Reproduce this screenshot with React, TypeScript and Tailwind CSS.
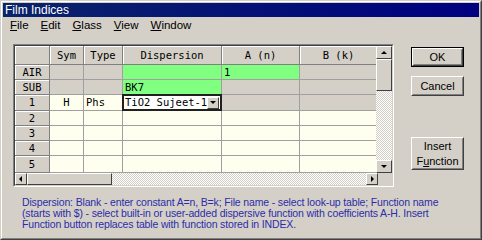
import React from "react";

const ui = "font-['Liberation_Sans',Arial,sans-serif]";
const mono = "font-['DejaVu_Sans_Mono',monospace]";

function Arrow({ dir }: { dir: "up" | "down" | "left" | "right" }) {
  const pts = {
    up: "1,5 4,2 7,5",
    down: "1,2 4,5 7,2",
    left: "5,1 2,4 5,7",
    right: "3,1 6,4 3,7",
  }[dir];
  return (
    <svg width="8" height="8" viewBox="0 0 8 8">
      <polygon points={pts} fill="#000" />
    </svg>
  );
}

function ScrollBtn({ dir, className }: { dir: "up" | "down" | "left" | "right"; className?: string }) {
  return (
    <div
      className={`flex items-center justify-center bg-[#d4d0c8] border border-t-white border-l-white border-r-[#404040] border-b-[#404040] ${className ?? ""}`}
    >
      <Arrow dir={dir} />
    </div>
  );
}

function WinButton({ children, def, className }: { children: React.ReactNode; def?: boolean; className?: string }) {
  return (
    <div className={`${def ? "border border-black" : ""} ${className ?? ""}`}>
      <div className="h-full border border-t-white border-l-white border-r-[#404040] border-b-[#404040]">
        <div className="h-full flex items-center justify-center text-center leading-[15px] border border-t-[#d4d0c8] border-l-[#d4d0c8] border-r-[#808080] border-b-[#808080] text-[11px] text-black">
          {children}
        </div>
      </div>
    </div>
  );
}

type Cell = { text?: string; bg: "head" | "gray" | "green" | "yellow" | "drop"; align?: "c" | "l" };

const headerRow: Cell[] = [
  { bg: "head" },
  { text: "Sym", bg: "head", align: "c" },
  { text: "Type", bg: "head", align: "c" },
  { text: "Dispersion", bg: "head", align: "c" },
  { text: "A (n)", bg: "head", align: "c" },
  { text: "B (k)", bg: "head", align: "c" },
];

const rows: Cell[][] = [
  [{ text: "AIR", bg: "head", align: "c" }, { bg: "gray" }, { bg: "gray" }, { bg: "green" }, { text: "1", bg: "green" }, { bg: "gray" }],
  [{ text: "SUB", bg: "head", align: "c" }, { bg: "gray" }, { bg: "gray" }, { text: "BK7", bg: "green" }, { bg: "gray" }, { bg: "gray" }],
  [{ text: "1", bg: "head", align: "c" }, { text: "H", bg: "yellow", align: "c" }, { text: "Phs", bg: "yellow" }, { text: "TiO2 Sujeet-1", bg: "drop" }, { bg: "gray" }, { bg: "gray" }],
  ...["2", "3", "4", "5"].map((n) => [
    { text: n, bg: "head", align: "c" } as Cell,
    { bg: "yellow" } as Cell,
    { bg: "yellow" } as Cell,
    { bg: "yellow" } as Cell,
    { bg: "yellow" } as Cell,
    { bg: "yellow" } as Cell,
  ]),
];

function GridCell({ cell }: { cell: Cell }) {
  const align = cell.align === "c" ? "justify-center" : "justify-start pl-[2px]";
  if (cell.bg === "head") {
    return (
      <div className={`flex items-center ${align} bg-[#d4d0c8] border-r border-b border-r-[#808080] border-b-[#808080] shadow-[inset_1px_1px_0_#fff] text-[#000] overflow-hidden`}>
        {cell.text}
      </div>
    );
  }
  if (cell.bg === "drop") {
    return (
      <div className="relative bg-[#fffff0] border-r border-b border-[#a0a0a0]">
        <div className="absolute -top-[1px] -left-[1px] -right-[1px] -bottom-[1px] flex items-center border-2 border-[#202020] bg-white">
          <span className="pl-[1px] flex-1 whitespace-nowrap overflow-hidden">{cell.text}</span>
          <div className="w-[12px] h-[12px] mr-[1px] flex items-center justify-center bg-[#d4d0c8] border border-t-white border-l-white border-r-[#404040] border-b-[#404040]">
            <Arrow dir="down" />
          </div>
        </div>
      </div>
    );
  }
  const bg = cell.bg === "gray" ? "bg-[#d4d0c8]" : cell.bg === "green" ? "bg-[#80ff80]" : "bg-[#fffff0]";
  return (
    <div className={`flex items-center ${align} ${bg} border-r border-b border-[#a0a0a0] overflow-hidden`}>
      {cell.text}
    </div>
  );
}

export default function App() {
  return (
    <div className={`w-[482px] h-[240px] bg-[#d4d0c8] ${ui} text-[11px] overflow-hidden`}>
      <div className="h-full border border-t-[#d4d0c8] border-l-[#d4d0c8] border-r-[#404040] border-b-[#404040]">
        <div className="h-full flex flex-col border border-t-white border-l-white border-r-[#808080] border-b-[#808080] p-[1px]">
          <div className="h-[14px] flex items-center pl-[2px] bg-[linear-gradient(to_right,#0a246a,#000080)] text-white text-[12px] leading-none">
            Film Indices
          </div>
          <div className="h-[17px] flex items-center pl-[1px] text-[11.5px] text-black">
            <span className="px-[6px]"><span className="underline">F</span>ile</span>
            <span className="px-[6px]"><span className="underline">E</span>dit</span>
            <span className="px-[6px]"><span className="underline">G</span>lass</span>
            <span className="px-[6px]"><span className="underline">V</span>iew</span>
            <span className="px-[6px]"><span className="underline">W</span>indow</span>
          </div>
          <div className="flex mt-[10px]">
            <div className="ml-[10px] w-[381px] h-[143px] border border-t-[#808080] border-l-[#808080] border-r-white border-b-white">
              <div className="h-full flex flex-col border border-t-[#404040] border-l-[#404040] border-r-[#d4d0c8] border-b-[#d4d0c8]">
                <div className="flex h-[127px]">
                  <div className={`w-[363px] h-[127px] overflow-hidden ${mono} text-[10.5px] text-black leading-none grid grid-cols-[35px_34px_39px_99px_78px_78px] grid-rows-[19px_15px_15px_16px_15px_15px_15px_17px]`}>
                    {[headerRow, ...rows].map((r, i) => r.map((c, j) => <GridCell key={`${i}-${j}`} cell={c} />))}
                  </div>
                  <div className="w-[16px] flex flex-col">
                    <ScrollBtn dir="up" className="h-[13px]" />
                    <div className="h-[32px] bg-[#d4d0c8] border border-t-white border-l-white border-r-[#404040] border-b-[#404040]" />
                    <div className="flex-1 bg-[#ebe9e5] bg-[repeating-conic-gradient(#d4d0c8_0%_25%,#ffffff_0%_50%)] bg-[length:2px_2px]" />
                    <ScrollBtn dir="down" className="h-[13px]" />
                  </div>
                </div>
                <div className="flex h-[13px]">
                  <ScrollBtn dir="left" className="w-[12px]" />
                  <div className="w-[85px] bg-[#d4d0c8] border border-t-white border-l-white border-r-[#404040] border-b-[#404040]" />
                  <div className="w-[254px] bg-[#ebe9e5] bg-[repeating-conic-gradient(#d4d0c8_0%_25%,#ffffff_0%_50%)] bg-[length:2px_2px]" />
                  <ScrollBtn dir="right" className="w-[12px]" />
                  <div className="flex-1 bg-[#d4d0c8]" />
                </div>
              </div>
            </div>
            <div className="ml-[17px] mt-[3px] w-[53px] flex flex-col">
              <WinButton def className="h-[20px]">OK</WinButton>
              <WinButton className="h-[20px] mt-[9px]">Cancel</WinButton>
              <WinButton className="h-[33px] mt-[41px]">
                <span>
                  Insert
                  <br />
                  F<span className="underline">u</span>nction
                </span>
              </WinButton>
            </div>
          </div>
          <div className="mt-[10px] ml-[19px] w-[440px] text-[10.5px] tracking-[-0.15px] leading-[11px] text-[#2c2ca8]">
            Dispersion: Blank - enter constant A=n, B=k; File name - select look-up table; Function name (starts with $) - select built-in or user-added dispersive function with coefficients A-H. Insert Function button replaces table with function stored in INDEX.
          </div>
        </div>
      </div>
    </div>
  );
}
